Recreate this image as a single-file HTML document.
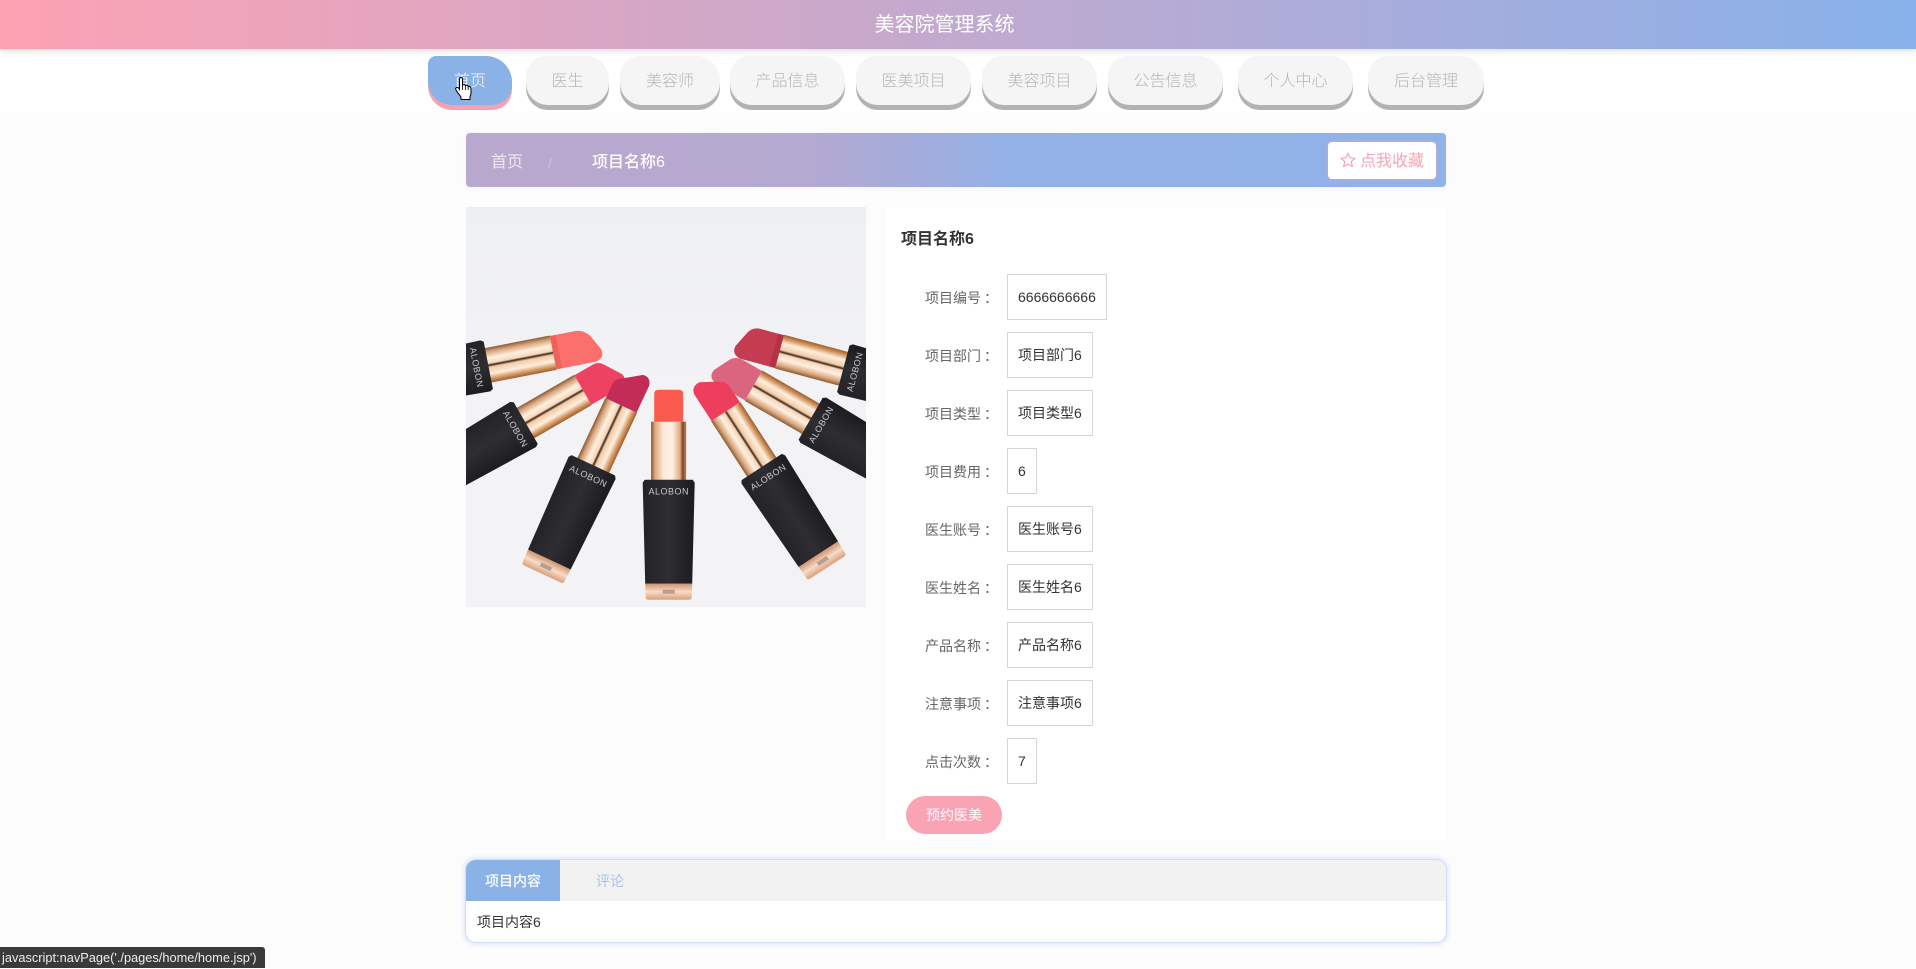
<!DOCTYPE html>
<html lang="zh-CN">
<head>
<meta charset="utf-8">
<title>美容院管理系统</title>
<style>
*{box-sizing:border-box;margin:0;padding:0}
html,body{width:1916px;height:968px;overflow:hidden;background:#fcfcfd;font-family:"Liberation Sans","Noto Sans CJK SC",sans-serif;}
.abs{position:absolute}
#hd{left:0;top:0;width:1916px;height:49px;background:linear-gradient(90deg,#fda2b3,#87b1ea);box-shadow:0 2px 6px rgba(0,0,0,.14);color:#fff;font-size:20px;line-height:50px;text-align:center;padding-right:27px;z-index:3;font-weight:400}
#navbg{left:0;top:49px;width:1916px;height:64px;background:#fff}
.nb{position:absolute;top:56px;height:49px;border-radius:20px 24px 22px 22px;background:#f5f5f5;box-shadow:0 5px 0 #b2b2b2;color:#b6b6b6;font-size:16px;line-height:51px;text-align:center;font-weight:300}
.nb.on{background:#8ab2e6;box-shadow:0 5px 0 #f5a1b3;color:#fff;border-radius:8px 26px 20px 24px}
#bc{left:466px;top:133px;width:980px;height:54px;border-radius:4px;background:linear-gradient(90deg,#b9a8cd 0%,#b4a9d1 35%,#a3acdb 46%,#93b1e6 55%,#90b3e8 100%);box-shadow:0 1px 6px rgba(180,180,200,.12)}
.bt{position:absolute;top:151px;font-size:16px;line-height:24px;color:#fff}
#fav{left:1328px;top:142px;width:108px;height:37px;background:#fff;border-radius:4px;box-shadow:0 0 4px rgba(245,165,190,.7)}
#favt{left:1360px;top:150px;font-size:16px;line-height:24px;color:#f7a3b6;font-weight:400}
#info{left:887px;top:207px;width:559px;height:633px;background:#fff}
#ttl{left:901px;top:228px;font-size:16px;font-weight:700;line-height:24px;color:#333}
.lb{position:absolute;left:925px;width:72px;font-size:14px;line-height:20px;color:#666;white-space:nowrap}
.lb i{font-style:normal;margin-left:3px}
.v{position:absolute;left:1007px;height:46px;border:1px solid #d6d6d6;background:#fff;padding:0 10px;font-size:14px;line-height:45px;color:#333;white-space:nowrap}
#yy{left:906px;top:796px;width:96px;height:38px;border-radius:19px;background:#f9a3b5;color:#fff;font-size:14px;line-height:39px;text-align:center}
#tabs{left:466px;top:860px;width:980px;height:82px;border-radius:10px;background:#fff;box-shadow:0 0 0 1px #d0dcf8,0 0 5px 2px #d8e3fa;overflow:hidden}
#tbar{left:0;top:0;width:980px;height:41px;background:#f2f2f2}
#tact{left:0;top:0;width:94px;height:41px;background:#8ab2e6;color:#fff;font-size:14px;font-weight:500;line-height:42px;text-align:center}
#tcm{left:130px;top:0;font-size:14px;line-height:42px;color:#a9c2ea}
#tct{left:11px;top:52px;font-size:14px;line-height:20px;color:#333}
#st{left:0;top:947px;width:265px;height:21px;background:#3a3a3a;border-top-right-radius:3px;color:#eee;font-size:12.8px;line-height:22px;padding-left:2px;white-space:nowrap;z-index:5}
</style>
</head>
<body>
<div class="abs" id="navbg"></div>
<div class="abs" id="hd">美容院管理系统</div>

<div class="nb on" style="left:428px;width:84px">首页</div>
<div class="nb" style="left:526px;width:83px">医生</div>
<div class="nb" style="left:620px;width:100px">美容师</div>
<div class="nb" style="left:730px;width:115px">产品信息</div>
<div class="nb" style="left:856px;width:115px">医美项目</div>
<div class="nb" style="left:982px;width:115px">美容项目</div>
<div class="nb" style="left:1108px;width:115px">公告信息</div>
<div class="nb" style="left:1238px;width:115px">个人中心</div>
<div class="nb" style="left:1368px;width:116px">后台管理</div>

<svg class="abs" style="left:455px;top:77px;z-index:4" width="17" height="23" viewBox="0 0 17 23">
<path d="M4.5 2Q4.5.5 6 .5T7.5 2V8.5Q7.8 7.6 9 7.6T10.4 9Q10.7 8.2 11.8 8.3T13.2 9.8Q13.6 9.2 14.6 9.5T16 11.5V16Q16 18 15 19.5V22.5H6V20Q4 17 2.5 15.5L1 13Q.2 11.5 1.3 10.7T3.5 11L4.5 12.5Z" fill="#fff" stroke="#000" stroke-width="1"/>
<path d="M7.5 8.5V13M10.4 9V13M13.2 9.8V13" fill="none" stroke="#000" stroke-width=".8"/>
</svg>

<div class="abs" id="bc"></div>
<div class="bt" style="left:491px;color:rgba(255,255,255,.75)">首页</div>
<div class="bt" style="left:548px;color:rgba(255,255,255,.3);font-size:14px">/</div>
<div class="bt" style="left:592px;font-weight:500">项目名称6</div>
<div class="abs" id="fav"></div>
<svg class="abs" style="left:1340px;top:152px" width="16" height="16" viewBox="0 0 16 16"><path d="M8 1.2 10 5.8 15 6.3 11.2 9.6 12.4 14.6 8 12 3.6 14.6 4.8 9.6 1 6.3 6 5.8Z" fill="none" stroke="#f7a3b6" stroke-width="1.2" stroke-linejoin="round"/></svg>
<div class="abs" id="favt">点我收藏</div>

<svg class="abs" style="left:466px;top:207px" width="400" height="400" viewBox="0 0 400 400">
<defs>
<linearGradient id="bg" x1="0" y1="0" x2="0" y2="1"><stop offset="0" stop-color="#eeeff3"/><stop offset=".45" stop-color="#f3f3f6"/><stop offset="1" stop-color="#f3f3f5"/></linearGradient>
<linearGradient id="bd" x1="0" y1="0" x2="1" y2="0"><stop offset="0" stop-color="#232327"/><stop offset=".5" stop-color="#2d2d32"/><stop offset="1" stop-color="#1c1c20"/></linearGradient>
<linearGradient id="bs" x1="0" y1="0" x2="0" y2="1"><stop offset="0" stop-color="#cf9470"/><stop offset=".5" stop-color="#f6dcc8"/><stop offset="1" stop-color="#d9a07c"/></linearGradient>
<linearGradient id="tb" x1="0" y1="0" x2="1" y2="0"><stop offset="0" stop-color="#8a5a36"/><stop offset=".12" stop-color="#d8a67c"/><stop offset=".3" stop-color="#fff0e0"/><stop offset=".45" stop-color="#f6d6b8"/><stop offset=".5" stop-color="#3a2418"/><stop offset=".56" stop-color="#f2cba6"/><stop offset=".75" stop-color="#ffeedd"/><stop offset=".9" stop-color="#cf9058"/><stop offset="1" stop-color="#9c5e30"/></linearGradient>
<linearGradient id="tc" x1="0" y1="0" x2="1" y2="0"><stop offset="0" stop-color="#7a4a2c"/><stop offset=".1" stop-color="#dca676"/><stop offset=".35" stop-color="#fde9da"/><stop offset=".6" stop-color="#fff0e6"/><stop offset=".82" stop-color="#e2ac84"/><stop offset=".9" stop-color="#7a4a30"/><stop offset="1" stop-color="#c08050"/></linearGradient>
<g id="B">
<path d="M-26 3-24 0H24L26 3 23.5 104H-23.5Z" fill="url(#bd)"/>
<path d="M-23.5 104H23.5L23 118Q23 120 20 120H-20Q-23 120-23 118Z" fill="url(#bs)"/>
<rect x="-6" y="110" width="12" height="4" fill="#8c7a6e" opacity=".6"/>
<text x="0" y="15" font-family="Liberation Sans,sans-serif" font-size="9" fill="#c9c9cc" text-anchor="middle" letter-spacing=".5">ALOBON</text>
</g>
<g id="L"><rect x="-17.5" y="-66" width="35" height="68" fill="url(#tb)"/><use href="#B"/></g>
<g id="C"><rect x="-17.5" y="-58" width="35" height="60" fill="url(#tc)"/><use href="#B"/></g>
</defs>
<rect width="400" height="400" fill="url(#bg)"/>
<g style="filter:blur(.35px)">
<g transform="translate(22.3 158.3) rotate(79)"><use href="#L"/><path d="M-17-66H17V-106Q15-116 6-114L-9-106Q-17-100-17-92Z" fill="#fb706c"/><path d="M-17-66H17V-72H-17Z" fill="#e8594f" opacity=".6"/></g>
<g transform="translate(377.3 161.7) rotate(-75)"><use href="#L"/><path d="M-17-66H17V-90Q17-98 10-102L-6-110Q-15-112-17-102Z" fill="#c53c50"/><path d="M-17-66H17V-72H-17Z" fill="#a92c3e" opacity=".6"/></g>
<g transform="translate(59.7 216) rotate(60)"><use href="#L"/><path d="M-17-66H17V-100Q15-110 6-108L-10-98Q-17-94-17-88Z" fill="#ee4262"/></g>
<g transform="translate(344.7 211.7) rotate(-60)"><use href="#L"/><path d="M-17-66H17V-88Q17-96 10-100L-6-108Q-15-110-17-100Z" fill="#dc657e"/></g>
<g transform="translate(127.3 258.3) rotate(25)"><use href="#L"/><path d="M-17-66H17V-96Q15-104 7-103L-9-92Q-17-88-17-82Z" fill="#c22c57"/></g>
<g transform="translate(295.7 260) rotate(-33)"><use href="#L"/><path d="M-17-66H17V-84Q17-92 9-96L-6-105Q-15-106-17-98Z" fill="#ee3e5d"/></g>
<g transform="translate(202.7 272.7)"><use href="#C"/><path d="M-14.5-58H14.5V-86Q14.5-90 10-90H-10Q-14.5-90-14.5-86Z" fill="#fb5a4e"/></g>
</g>
</svg>

<div class="abs" id="info"></div>
<div class="abs" id="ttl">项目名称6</div>

<div class="lb" style="top:288px">项目编号<i>：</i></div><div class="v" style="top:274px;width:100px">6666666666</div>
<div class="lb" style="top:346px">项目部门<i>：</i></div><div class="v" style="top:332px;width:86px">项目部门6</div>
<div class="lb" style="top:404px">项目类型<i>：</i></div><div class="v" style="top:390px;width:86px">项目类型6</div>
<div class="lb" style="top:462px">项目费用<i>：</i></div><div class="v" style="top:448px;width:30px">6</div>
<div class="lb" style="top:520px">医生账号<i>：</i></div><div class="v" style="top:506px;width:86px">医生账号6</div>
<div class="lb" style="top:578px">医生姓名<i>：</i></div><div class="v" style="top:564px;width:86px">医生姓名6</div>
<div class="lb" style="top:636px">产品名称<i>：</i></div><div class="v" style="top:622px;width:86px">产品名称6</div>
<div class="lb" style="top:694px">注意事项<i>：</i></div><div class="v" style="top:680px;width:86px">注意事项6</div>
<div class="lb" style="top:752px">点击次数<i>：</i></div><div class="v" style="top:738px;width:30px">7</div>
<div class="abs" id="yy">预约医美</div>

<div class="abs" id="tabs">
<div class="abs" id="tbar"></div>
<div class="abs" id="tact">项目内容</div>
<div class="abs" id="tcm">评论</div>
<div class="abs" id="tct">项目内容6</div>
</div>

<div class="abs" id="st">javascript:navPage('./pages/home/home.jsp')</div>
</body>
</html>
